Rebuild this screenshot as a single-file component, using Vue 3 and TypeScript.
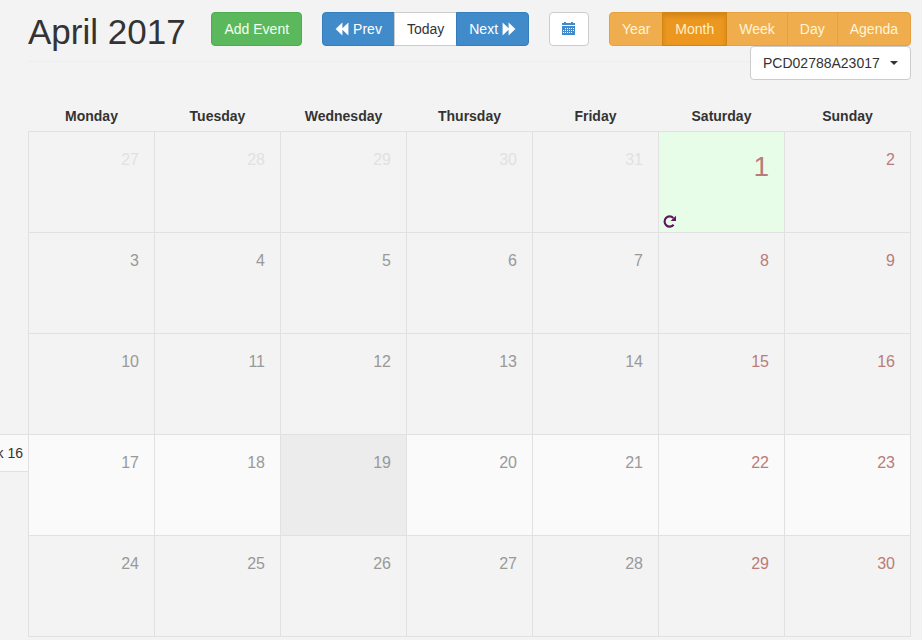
<script setup lang="ts">
import { ref } from 'vue'

interface Day {
  date: number
  outside: boolean
  weekend: boolean
  today: boolean
  hover: boolean
  event: boolean
}

const weekdays = ['Monday', 'Tuesday', 'Wednesday', 'Thursday', 'Friday', 'Saturday', 'Sunday']
const views = ['Year', 'Month', 'Week', 'Day', 'Agenda']
const activeView = ref('Month')
const device = ref('PCD02788A23017')

const FIRST_WEEK = 13
const hoveredWeek = 16
const leading = [27, 28, 29, 30, 31]

const dates = [...leading, ...Array.from({ length: 30 }, (_, i) => i + 1)]

const weeks = Array.from({ length: 5 }, (_, w) => ({
  number: FIRST_WEEK + w,
  days: dates.slice(w * 7, w * 7 + 7).map((date, d): Day => {
    const outside = w * 7 + d < leading.length
    return {
      date,
      outside,
      weekend: d > 4,
      today: !outside && date === 1,
      hover: !outside && date === 19,
      event: !outside && date === 1,
    }
  }),
}))
</script>

<template>
  <main class="page">
    <header class="header">
      <h1>April 2017</h1>
      <div class="toolbar">
        <button type="button" class="btn success">Add Event</button>
        <div class="group">
          <button type="button" class="btn primary">
            <svg class="icon" viewBox="0 0 14 14" aria-hidden="true"><path d="M7.4 .5v5.7L13.4 .5v13L7.4 7.8v5.7L.6 7z" /></svg>
            Prev
          </button>
          <button type="button" class="btn">Today</button>
          <button type="button" class="btn primary">
            Next
            <svg class="icon" viewBox="0 0 14 14" aria-hidden="true"><path d="M6.6 .5v5.7L.6 .5v13l6-5.7v5.7L13.4 7z" /></svg>
          </button>
        </div>
        <button type="button" class="btn" aria-label="Choose date">
          <svg class="icon calendar-icon" viewBox="0 0 14 14" aria-hidden="true">
            <path d="M0 1h2V0h2v1h5V0h2v1h2v2H0z" />
            <path fill-rule="evenodd" d="M0 4h13v9H0zM3 6h1v1H3zM5 6h1v1H5zM7 6h1v1H7zM9 6h1v1H9zM11 6h1v1h-1zM1 8h1v1H1zM3 8h1v1H3zM5 8h1v1H5zM7 8h1v1H7zM9 8h1v1H9zM11 8h1v1h-1zM1 10h1v1H1zM3 10h1v1H3zM5 10h1v1H5zM7 10h1v1H7zM9 10h1v1H9z" />
          </svg>
        </button>
        <div class="group">
          <button
            v-for="view in views"
            :key="view"
            type="button"
            class="btn warning"
            :class="{ active: view === activeView }"
            @click="activeView = view"
          >{{ view }}</button>
        </div>
        <div class="device">
          <select v-model="device" aria-label="Device">
            <option>PCD02788A23017</option>
          </select>
          <svg class="caret" viewBox="0 0 8 4" aria-hidden="true"><path d="M0 0h8L4 4z" /></svg>
        </div>
      </div>
    </header>

    <table class="calendar">
      <thead>
        <tr>
          <th v-for="name in weekdays" :key="name" scope="col">{{ name }}</th>
        </tr>
      </thead>
      <tbody>
        <tr v-for="week in weeks" :key="week.number" :class="{ highlighted: week.number === hoveredWeek }">
          <td
            v-for="(day, i) in week.days"
            :key="i"
            :class="{ outside: day.outside, weekend: day.weekend, today: day.today, hovered: day.hover }"
          >
            <div v-if="i === 0 && week.number === hoveredWeek" class="week-tab">Week {{ week.number }}</div>
            <div class="cell">
              <span class="date">{{ day.date }}</span>
              <svg v-if="day.event" class="event" viewBox="0 0 12 12" aria-hidden="true">
                <path class="arc" d="M9.8 9A4.7 4.7 0 1 1 9.5 2.7" />
                <path d="M12 .6v4.9H7z" />
              </svg>
            </div>
          </td>
        </tr>
      </tbody>
    </table>
  </main>
</template>

<style>
body {
  margin: 0;
  background: #f3f3f3;
}
</style>

<style scoped>
.page {
  padding: 12px 11px 0 28px;
  font-family: "Liberation Sans", Arial, sans-serif;
  font-size: 14px;
  line-height: 20px;
  color: #333;
}
.header {
  display: flex;
  align-items: flex-start;
  justify-content: space-between;
  padding-bottom: 10px;
  border-bottom: 1px solid #eee;
}
h1 {
  margin: 0;
  font-size: 35px;
  font-weight: 500;
  line-height: 39px;
  white-space: nowrap;
}
.toolbar {
  position: relative;
  display: flex;
  gap: 20px;
  height: 34px;
}
.group {
  display: flex;
}
.btn,
select {
  height: 34px;
  padding: 0 12px;
  border: 1px solid #ccc;
  border-radius: 4px;
  background: #fff;
  color: #333;
  font: inherit;
  white-space: nowrap;
  cursor: pointer;
}
.btn {
  display: flex;
  align-items: center;
  gap: 4px;
}
.group .btn + .btn {
  margin-left: -1px;
  border-top-left-radius: 0;
  border-bottom-left-radius: 0;
}
.group .btn:not(:last-child) {
  border-top-right-radius: 0;
  border-bottom-right-radius: 0;
}
.btn.success {
  background: #5cb85c;
  border-color: #4cae4c;
  color: #f4fff0;
}
.btn.primary {
  background: #428bca;
  border-color: #357ebd;
  color: #fff;
}
.btn.warning {
  background: #f0ad4e;
  border-color: #e5a03f;
  color: #fff5d8;
}
.btn.warning.active {
  z-index: 1;
  background: #ec971f;
  border-color: #d58512;
  color: #fff0c4;
  box-shadow: inset 0 3px 5px rgba(0, 0, 0, 0.125);
}
.icon {
  width: 14px;
  height: 14px;
  fill: currentColor;
}
.calendar-icon {
  fill: #428bca;
}
.device {
  position: absolute;
  top: 100%;
  right: 0;
}
select {
  display: block;
  appearance: none;
  padding-right: 30px;
}
.caret {
  position: absolute;
  top: 15px;
  right: 13px;
  width: 8px;
  height: 4px;
  fill: #333;
  pointer-events: none;
}
.calendar {
  width: 100%;
  margin-top: 39px;
  table-layout: fixed;
  border-collapse: collapse;
}
th {
  height: 30px;
  padding: 0;
  font-size: 14px;
}
td {
  position: relative;
  height: 100px;
  padding: 0;
  border: 1px solid #e1e1e1;
}
.cell {
  display: flex;
  flex-direction: column;
  align-items: flex-end;
  justify-content: space-between;
  box-sizing: border-box;
  height: 100px;
  padding: 18px 15px 4px 4px;
}
.date {
  font-size: 16px;
  color: #999;
}
.weekend .date {
  color: #b97d79;
}
.outside .date {
  color: #e1e1e1;
}
.today {
  background: #e8fde7;
}
.today .date {
  font-size: 28px;
  line-height: 34px;
}
.highlighted td {
  background: #fafafa;
}
.highlighted .hovered {
  background: #ececec;
}
.event {
  align-self: flex-start;
  width: 13px;
  height: 13px;
  fill: #631363;
}
.arc {
  fill: none;
  stroke: #631363;
  stroke-width: 2;
}
.week-tab {
  position: absolute;
  top: -1px;
  right: 100%;
  padding: 8px 5px 8px 12px;
  border: 1px solid #e1e1e1;
  background: #fafafa;
  white-space: nowrap;
}
</style>
